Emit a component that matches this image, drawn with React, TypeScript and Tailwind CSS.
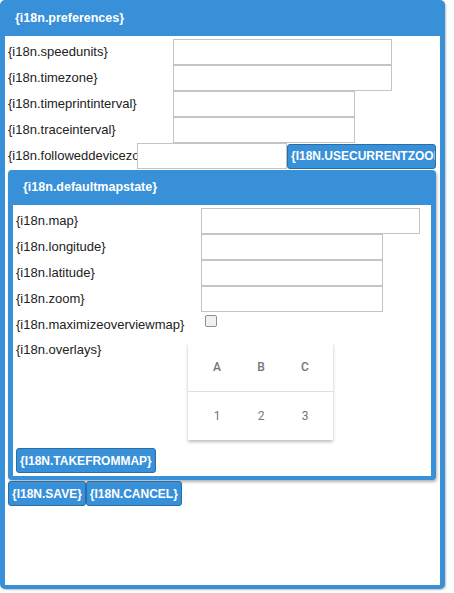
import React from "react";

const BLUE = "bg-[#3790d8]";

function Field({ label, width, labelWidth }: { label: string; width: string; labelWidth: string }) {
  return (
    <div className="flex h-[26px] items-center">
      <div className={`${labelWidth} shrink-0 overflow-hidden whitespace-nowrap`}>{label}</div>
      <input type="text" className={`${width} h-[26px] border border-[#c4c4c4] bg-white outline-none`} />
    </div>
  );
}

function Btn({ children, className = "" }: { children: React.ReactNode; className?: string }) {
  return (
    <button
      className={`h-[25px] shrink-0 overflow-hidden whitespace-nowrap rounded-[3px] border border-[#2a6ea8] bg-[#3790d8] px-[3px] text-left text-[12px] font-bold uppercase text-white ${className}`}
    >
      {children}
    </button>
  );
}

export default function App() {
  return (
    <div className="h-[593px] w-[454px] bg-white text-[13px] text-[#222] [font-family:'Liberation_Sans',Arial,sans-serif]">
      <div className={`flex h-[589px] w-[445px] flex-col rounded-[5px] ${BLUE} px-[5px] pb-[4px] shadow-[1px_1px_2px_rgba(0,0,0,0.25)]`}>
        <div className="flex h-[36px] shrink-0 items-center pl-[10px] text-[12.5px] font-bold text-white">
          {"{i18n.preferences}"}
        </div>
        <div className="flex flex-1 flex-col bg-white pl-[3px] pt-[3px]">
          <Field label="{i18n.speedunits}" labelWidth="w-[165px]" width="w-[219px]" />
          <Field label="{i18n.timezone}" labelWidth="w-[165px]" width="w-[219px]" />
          <Field label="{i18n.timeprintinterval}" labelWidth="w-[165px]" width="w-[182px]" />
          <Field label="{i18n.traceinterval}" labelWidth="w-[165px]" width="w-[182px]" />
          <div className="flex h-[26px] items-center">
            <div className="w-[129px] shrink-0 overflow-hidden whitespace-nowrap">{"{i18n.followeddevicezoom}"}</div>
            <input type="text" className="h-[26px] w-[150px] border border-[#c4c4c4] bg-white outline-none" />
            <Btn className="w-[149px]">{"{i18n.usecurrentzoom}"}</Btn>
          </div>

          <div className={`mt-[1px] flex w-[428px] flex-col rounded-[4px] ${BLUE} px-[5px] pb-[4px] shadow-[1px_2px_3px_rgba(0,0,0,0.3)]`}>
            <div className="flex h-[35px] items-center pl-[10px] text-[12.5px] font-bold text-white">
              {"{i18n.defaultmapstate}"}
            </div>
            <div className="flex flex-col bg-white pb-[3px] pl-[3px] pt-[3px]">
              <Field label="{i18n.map}" labelWidth="w-[185px]" width="w-[219px]" />
              <Field label="{i18n.longitude}" labelWidth="w-[185px]" width="w-[182px]" />
              <Field label="{i18n.latitude}" labelWidth="w-[185px]" width="w-[182px]" />
              <Field label="{i18n.zoom}" labelWidth="w-[185px]" width="w-[182px]" />
              <div className="flex h-[24px] items-center">
                <div className="w-[189px] shrink-0 whitespace-nowrap pt-[2px]">{"{i18n.maximizeoverviewmap}"}</div>
                <div className="mb-[7px] h-[12px] w-[12px] rounded-[2px] border border-[#8f8f8f] bg-[#f0f0f0]" />
              </div>
              <div className="flex">
                <div className="w-[172px] shrink-0 pt-[4px]">{"{i18n.overlays}"}</div>
                <div className="mt-[7px] flex w-[145px] flex-col bg-white text-[12px] text-[#757575] shadow-[0_2px_3px_rgba(0,0,0,0.25)] [font-family:Roboto,sans-serif]">
                  <div className="grid h-[49px] grid-cols-3 items-center border-b border-[#e0e0e0] pl-[7px] pr-[6px] text-center font-medium">
                    <span>A</span>
                    <span>B</span>
                    <span>C</span>
                  </div>
                  <div className="grid h-[48px] grid-cols-3 items-center pl-[7px] pr-[6px] text-center">
                    <span>1</span>
                    <span>2</span>
                    <span>3</span>
                  </div>
                </div>
              </div>
              <div className="mt-[8px] flex">
                <Btn>{"{i18n.takefrommap}"}</Btn>
              </div>
            </div>
          </div>

          <div className="mt-[1px] flex">
            <Btn>{"{i18n.save}"}</Btn>
            <Btn>{"{i18n.cancel}"}</Btn>
          </div>
        </div>
      </div>
    </div>
  );
}
